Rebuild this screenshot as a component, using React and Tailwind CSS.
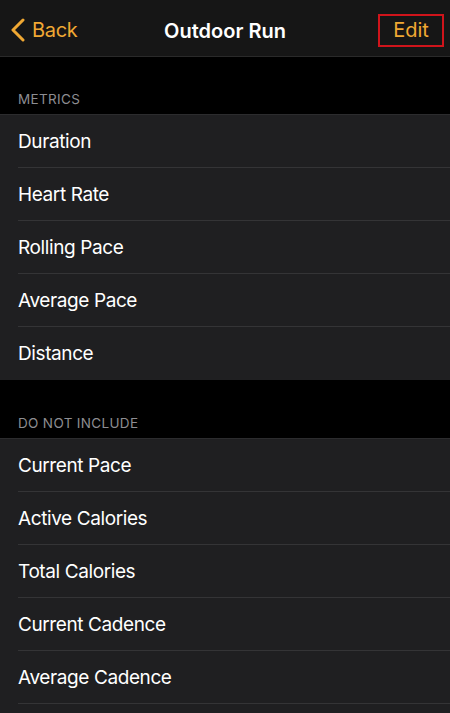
import React from "react";

const metrics = ["Duration", "Heart Rate", "Rolling Pace", "Average Pace", "Distance"];
const excluded = ["Current Pace", "Active Calories", "Total Calories", "Current Cadence", "Average Cadence"];

function Row({ label, last }) {
  return (
    <div className="pl-[18px] bg-[#1f1f21]">
      <div className={"h-[53px] flex items-center pr-4 " + (last ? "" : "border-b border-[#343436]")}>
        <span className="text-[19px] text-white leading-none tracking-[-0.4px]">{label}</span>
      </div>
    </div>
  );
}

export default function App() {
  return (
    <div className="w-[450px] h-[713px] overflow-hidden bg-black" style={{ fontFamily: "Inter, 'Noto Sans', sans-serif" }}>
      <div className="h-[57px] pt-[4px] bg-[#161616] border-b border-[#2a2a2a] flex items-center justify-between relative">
        <div className="flex items-center pl-[10px] gap-[6px] text-[#f0a833]">
          <svg width="16" height="24" viewBox="0 0 16 24" fill="none">
            <path d="M13 2 L3 12 L13 22" stroke="#f0a833" strokeWidth="3" strokeLinecap="round" strokeLinejoin="round" />
          </svg>
          <span className="text-[20px] leading-none tracking-[-0.3px]">Back</span>
        </div>
        <div className="absolute left-0 right-0 pt-[4px] text-center pointer-events-none">
          <span className="text-[20px] font-semibold text-white leading-none">Outdoor Run</span>
        </div>
        <div className="mr-[6px] w-[66px] h-[33px] border-2 border-[#d0141b] flex items-center justify-center">
          <span className="text-[20px] text-[#f0a833] leading-none">Edit</span>
        </div>
      </div>
      <div className="h-[57px] flex items-end pl-[18px] pb-[8px]">
        <span className="text-[13.5px] text-[#8d8d92] tracking-wide leading-none">METRICS</span>
      </div>
      <div className="border-t border-[#2c2c2e]">
        {metrics.map((m, i) => (
          <Row key={m} label={m} last={i === metrics.length - 1} />
        ))}
      </div>
      <div className="h-[59px] flex items-end pl-[18px] pb-[8px] border-b border-[#2c2c2e]">
        <span className="text-[13.5px] text-[#8d8d92] tracking-wide leading-none">DO NOT INCLUDE</span>
      </div>
      <div>
        {excluded.map((m) => (
          <Row key={m} label={m} />
        ))}
        <div className="h-[20px] bg-[#1f1f21]" />
      </div>
    </div>
  );
}
